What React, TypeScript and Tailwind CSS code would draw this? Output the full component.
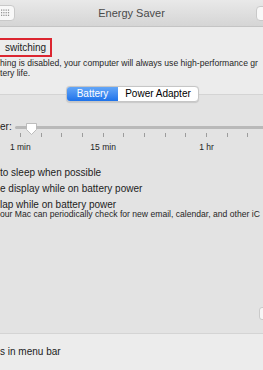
import React from "react"

const ticks = Array.from({ length: 12 }, (_, i) => i)

const tickLabels: Record<number, string> = { 0: "1 min", 4: "15 min", 9: "1 hr" }

const Thumb = () => (
  <svg width="13" height="14" viewBox="0 0 13 14" className="absolute left-[10px] top-[-4px]">
    <path
      d="M1.5 1.5 H11.5 V7.5 L6.5 12.5 L1.5 7.5 Z"
      fill="#ffffff"
      stroke="#b0b0b0"
      strokeWidth="0.8"
      strokeLinejoin="round"
    />
  </svg>
)

const GridDots = () => (
  <svg width="9" height="8" viewBox="0 0 9 8">
    {[0, 1, 2, 3].map((c) =>
      [0, 1, 2].map((r) => (
        <rect key={`${c}-${r}`} x={c * 2.3} y={r * 2.6 + 0.5} width="1.2" height="1.2" fill="#8a8a8a" />
      ))
    )}
  </svg>
)

export default function App() {
  return (
    <div
      className="w-[263px] h-[370px] overflow-hidden bg-[#ececec] text-[#1c1c1c] flex flex-col"
      style={{ fontFamily: '"Liberation Sans", Arial, sans-serif' }}
    >
      {/* title bar */}
      <div className="h-[27px] shrink-0 grid grid-cols-[1fr_auto_1fr] items-center bg-gradient-to-b from-[#e9e9e9] to-[#d5d5d5] border-b border-[#c4c4c4]">
        <div className="justify-self-start -ml-[8px] w-[23px] h-[16px] rounded-[4px] bg-[#f8f8f8] border border-[#c9c9c9] flex items-center justify-end pr-[4px]">
          <GridDots />
        </div>
        <span className="text-[11px] text-[#4a4a4a]">Energy Saver</span>
        <div className="justify-self-end -mr-[16px] w-[23px] h-[15px] rounded-[4px] bg-[#f8f8f8] border border-[#c9c9c9]" />
      </div>

      {/* graphics switching */}
      <div className="mt-[11px] -ml-[3px] w-[55px] h-[19px] border-2 border-[#dc2630] flex items-center pl-[6px]">
        <span className="text-[10px] leading-none">switching</span>
      </div>
      <div className="mt-[1px] text-[8.6px] leading-[10px] text-[#262626] whitespace-nowrap">
        <div>hing is disabled, your computer will always use high-performance gr</div>
        <div>tery life.</div>
      </div>

      {/* segmented control */}
      <div className="relative z-10 mt-[8px] -mb-[8px] ml-[66px] flex h-[16px] w-[133px] rounded-[4px] border border-[#c6c6c6] bg-white text-[10px] leading-none shadow-[0_0.5px_1px_rgba(0,0,0,0.12)] overflow-hidden">
        <div className="w-[51px] flex items-center justify-center bg-gradient-to-b from-[#63a6f7] to-[#1c72ea] text-white">
          Battery
        </div>
        <div className="flex-1 flex items-center justify-center text-black">Power Adapter</div>
      </div>

      {/* inset panel */}
      <div className="h-[240px] shrink-0 bg-[#e3e3e3] border-y border-[#d4d4d4] flex flex-col">
        <div className="mt-[26px] h-[12px] flex items-center">
          <span className="text-[10px] leading-none w-[15px] shrink-0">er:</span>
          <div className="relative flex-1 h-[3px] rounded-l-full bg-[#b9b9b9]">
            <Thumb />
          </div>
        </div>

        <div className="ml-[10px] grid grid-cols-[repeat(12,20.7px)] h-[4px]">
          {ticks.map((t) => (
            <div key={t} className="flex justify-center">
              <div className="w-px h-[4px] bg-[#9c9c9c]" />
            </div>
          ))}
        </div>

        <div className="mt-[5px] ml-[10px] grid grid-cols-[repeat(12,20.7px)] h-[10px] text-[8.5px] leading-[10px] text-[#222]">
          {ticks.map((t) => (
            <div key={t} className="flex justify-center whitespace-nowrap">
              {tickLabels[t] ?? ""}
            </div>
          ))}
        </div>

        <div className="mt-[13px] h-[14px] flex items-center text-[10px] whitespace-nowrap">to sleep when possible</div>
        <div className="mt-[2px] h-[14px] flex items-center text-[10px] whitespace-nowrap">e display while on battery power</div>
        <div className="mt-[3px] h-[12px] flex items-center text-[10px] whitespace-nowrap">lap while on battery power</div>
        <div className="mt-[-1px] text-[8.6px] leading-[10px] text-[#262626] whitespace-nowrap">
          our Mac can periodically check for new email, calendar, and other iC
        </div>

        <div className="mt-[88px] self-end -mr-[18px] w-[22px] h-[13px] rounded-[3px] bg-[#f6f6f6] border border-[#cacaca]" />
      </div>

      {/* bottom */}
      <div className="mt-[12px] text-[10px] leading-[12px] whitespace-nowrap">s in menu bar</div>
    </div>
  )
}
